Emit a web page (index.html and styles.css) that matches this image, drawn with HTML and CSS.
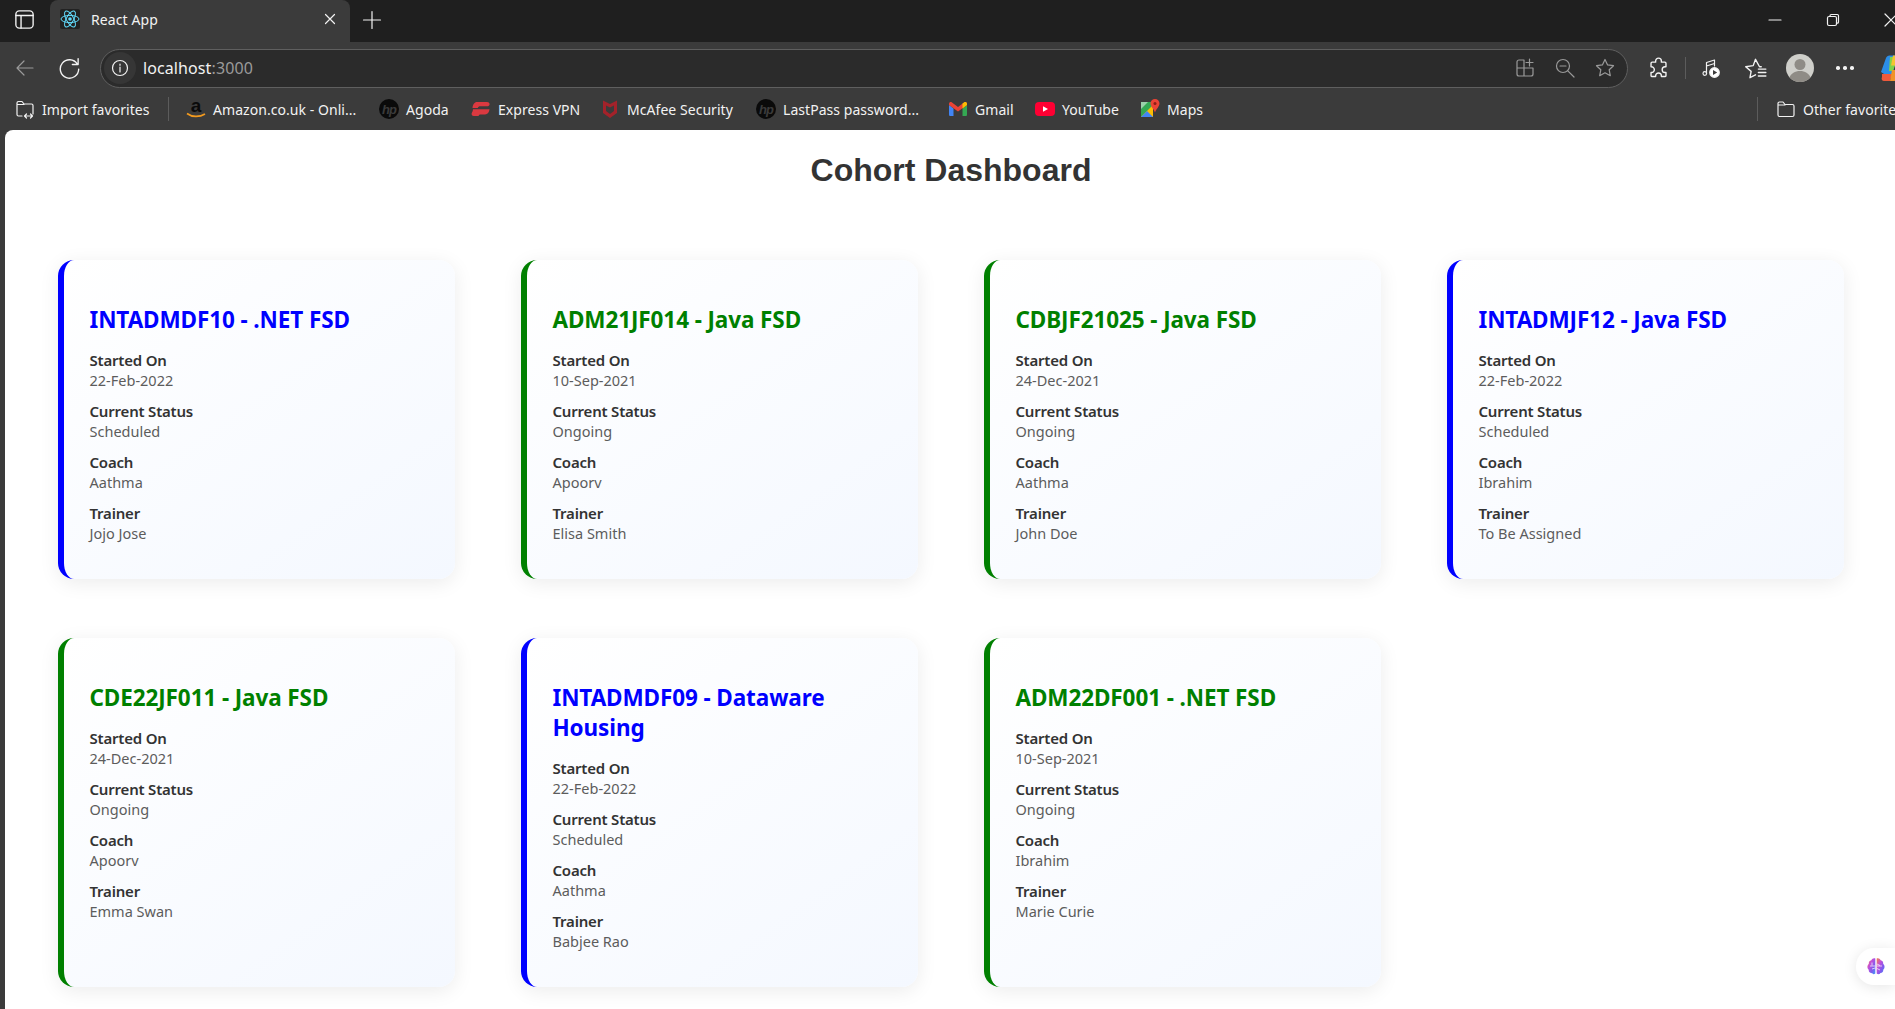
FILE: index.html
```html
<!DOCTYPE html>
<html lang="en">
  <head>
    <meta charset="UTF-8" />
    <meta name="viewport" content="width=device-width, initial-scale=1.0" />
    <title>React App</title>
    <link rel="stylesheet" href="styles.css">
  </head>
  <body>
    <!-- browser frame -->
    <div class="tabstrip">
      <div class="tab-slot">
        <svg class="icon icon-lg" viewBox="0 0 20 20"><rect x="2.500" y="2.500" width="15" height="15" rx="3"/><path d="M2.500 6.500h15M7 6.500v11"/></svg>
      </div>
      <div class="tab">
        <svg class="favicon" viewBox="0 0 20 20">
          <rect width="20" height="20" rx="2" fill="#222"/>
          <g fill="none" stroke="#61dafb" stroke-width="1">
            <ellipse cx="10" cy="10" rx="9" ry="3.600"/>
            <ellipse cx="10" cy="10" rx="9" ry="3.600" transform="rotate(60 10 10)"/>
            <ellipse cx="10" cy="10" rx="9" ry="3.600" transform="rotate(120 10 10)"/>
          </g>
          <circle cx="10" cy="10" r="1.800" fill="#61dafb"/>
        </svg>
        <span class="tab-title">React App</span>
        <svg class="tab-close" viewBox="0 0 12 12"><path d="M1.500 1.500l9 9M10.500 1.500l-9 9"/></svg>
      </div>
      <svg class="new-tab" viewBox="0 0 20 20"><path d="M10 1.500v17M1.500 10h17"/></svg>
      <div class="win-controls">
        <div class="win-btn"><svg class="icon-sm" viewBox="0 0 14 14"><path d="M1 7h12"/></svg></div>
        <div class="win-btn"><svg class="icon-sm" viewBox="0 0 14 14"><rect x="1.500" y="3.500" width="9" height="9" rx="1.500"/><path d="M4 3.500V2.800c0-.8.500-1.300 1.300-1.300h6c.7 0 1.200.5 1.200 1.200v6.200c0 .8-.5 1.300-1.300 1.300h-.7"/></svg></div>
        <div class="win-btn"><svg class="icon-sm" viewBox="0 0 14 14"><path d="M1 1l12 12M13 1L1 13"/></svg></div>
      </div>
    </div>

    <div class="toolbar">
      <div class="tool-btn back">
        <svg class="icon dim" viewBox="0 0 20 20"><path d="M18 10H2M9 3l-7 7 7 7"/></svg>
      </div>
      <div class="tool-btn reload">
        <svg class="icon icon-lg" viewBox="0 0 20 20"><path d="M16.800 6.200A8 8 0 1 0 18 10.500M17.500 1.500v5h-5"/></svg>
      </div>
      <div class="address">
        <div class="site-info">
          <svg class="icon" viewBox="0 0 20 20"><circle cx="10" cy="10" r="7.500"/><path d="M10 9v5M10 6v1.300"/></svg>
        </div>
        <span class="url">localhost<span class="port">:3000</span></span>
        <div class="address-icons">
          <svg class="icon dim" viewBox="0 0 20 20"><path d="M9 2H4a2 2 0 0 0-2 2v12a2 2 0 0 0 2 2h12a2 2 0 0 0 2-2V10H2M9 2v16M14.500 1v7M11 4.500h7"/></svg>
          <svg class="icon dim" viewBox="0 0 20 20"><circle cx="8" cy="8" r="6.500"/><path d="M12.800 12.800L19 19M5 8h6"/></svg>
          <svg class="icon dim" viewBox="0 0 20 20"><path d="M10 1.500l2.600 5.400 5.900.8-4.300 4.100 1.100 5.900L10 14.800l-5.300 2.900 1.100-5.900L1.500 7.700l5.900-.8z"/></svg>
        </div>
      </div>
      <div class="tool-btn ext">
        <svg class="icon icon-lg" viewBox="0 0 20 20"><path d="M7.500 4.500V3.500a2.500 2.500 0 0 1 5 0v1h3a1 1 0 0 1 1 1v3h-.8a2.500 2.500 0 0 0 0 5h.8v2.500a1 1 0 0 1-1 1h-3v-.6a2.500 2.500 0 0 0-5 0v.6h-3a1 1 0 0 1-1-1v-2.500h.4a2.500 2.500 0 0 0 0-5h-.4v-3a1 1 0 0 1 1-1z"/></svg>
      </div>
      <div class="tool-sep"></div>
      <div class="tool-btn">
        <svg class="icon" viewBox="0 0 20 20"><path d="M5.500 15.500V4.500l8-2.500v6M5.500 8l8-2.500"/><circle cx="3.800" cy="15.500" r="1.800"/><circle cx="13.500" cy="14.500" r="4.800" fill="#fff"/><path d="M12 12l4.200 2.500-4.200 2.500z" fill="#3b3b3b" stroke="none"/></svg>
      </div>
      <div class="tool-btn favs">
        <svg class="icon icon-lg" viewBox="0 0 20 20"><path d="M15 8.500h-1.500L10 2 8 7.500 1.500 8.500l4.700 4-1 5.500 4.800-2.500M12.500 10.500H19M12.500 13.500H19M12.500 16.500H19"/></svg>
      </div>
      <div class="tool-btn avatar-btn">
        <svg class="avatar" viewBox="0 0 28 28">
          <circle cx="14" cy="14" r="14" fill="#cfcfca"/>
          <circle cx="14" cy="10.500" r="5.500" fill="#8f8c86"/>
          <path d="M3.500 23.500c1.500-4 5.500-6.500 10.500-6.500s9 2.500 10.500 6.500A14 14 0 0 1 14 28a14 14 0 0 1-10.500-4.500z" fill="#8f8c86"/>
        </svg>
      </div>
      <div class="tool-btn dots"><span></span><span></span><span></span></div>
      <div class="tool-btn">
        <svg class="copilot" viewBox="0 0 24 28">
          <path d="M3 18L8 4c.5-1.500 2-2.500 3.500-2.500H20L14 20H6z" fill="#2b8ee8"/>
          <path d="M12 3h8l-5 14h-4z" fill="#7ed24a"/>
          <path d="M15 1.500h6l-3 10h-5z" fill="#f4c430"/>
          <path d="M4 20h10l-2 7H6c-2 0-3-2-2-4z" fill="#ef5a3c"/>
          <path d="M14 16h6l-3 11h-5z" fill="#f0932b"/>
        </svg>
      </div>
    </div>

    <div class="bookmarks">
      <div class="bm bm-import">
        <svg class="icon" viewBox="0 0 20 20"><path d="M7 17H3.500A1.500 1.500 0 0 1 2 15.500V4a1.500 1.500 0 0 1 1.500-1.500H7L9 5h7.500A1.500 1.500 0 0 1 18 6.500V15M2 5.500h7M9.500 17h8M11.500 15l-2 2 2 2M15.500 15l2 2-2 2"/></svg>
        <span>Import favorites</span>
      </div>
      <div class="bm-sep"></div>
      <div class="bm bm-amazon">
        <svg class="bm-icon" viewBox="0 0 20 20">
          <text x="10" y="12.500" text-anchor="middle" class="amazon-a">a</text>
          <path d="M1 14.500c5 3.800 12.500 3.800 18 .5" fill="none" stroke="#f29a1f" stroke-width="1.600"/>
        </svg>
        <span>Amazon.co.uk - Onli...</span>
      </div>
      <div class="bm bm-agoda">
        <svg class="bm-icon" viewBox="0 0 20 20"><circle cx="10" cy="10" r="10" fill="#0a0a0a"/><text x="10" y="14.500" text-anchor="middle" class="hp-mark">hp</text></svg>
        <span>Agoda</span>
      </div>
      <div class="bm bm-express">
        <svg class="bm-icon" viewBox="0 0 20 20">
          <path d="M6 3h10c3 0 3.500 3.500 1 4.200H9.500C8 7.200 7 7.800 6.800 9H1.500C1.800 5.500 3.500 3 6 3z" fill="#da3940"/>
          <path d="M2 10.200h16.500c-.2 3-2 5-4.500 5.200H9.500c-1 0-1.800.5-2 1.600H3c-2.300 0-3-2-2-3.500.6-.9 1-2 1-3.300z" fill="#da3940"/>
        </svg>
        <span>Express VPN</span>
      </div>
      <div class="bm bm-mcafee">
        <svg class="bm-icon" viewBox="0 0 20 20"><path d="M3 1.500l7 3.500 7-3.500V14l-7 5-7-5z" fill="#a3222a"/><path d="M6 6.500l4 2 4-2V12l-4 3-4-3z" fill="#3b3b3b"/></svg>
        <span>McAfee Security</span>
      </div>
      <div class="bm bm-lastpass">
        <svg class="bm-icon" viewBox="0 0 20 20"><circle cx="10" cy="10" r="10" fill="#0a0a0a"/><text x="10" y="14.500" text-anchor="middle" class="hp-mark">hp</text></svg>
        <span>LastPass password...</span>
      </div>
      <div class="bm bm-gmail">
        <svg class="bm-icon" viewBox="0 0 20 20">
          <path d="M1 6l4.500 3.500V17H2.500C1.500 17 1 16.500 1 15.500z" fill="#4285f4"/>
          <path d="M19 6l-4.500 3.500V17h3c1 0 1.500-.5 1.500-1.500z" fill="#34a853"/>
          <path d="M1 5c0-2 2-2.500 3-1.500l6 4.500 6-4.500c1-1 3-.5 3 1.500v1l-9 6.500L1 6z" fill="#ea4335"/>
          <path d="M14.500 4.600L16 3.500c1-1 3-.5 3 1.500v1l-4.500 3.500z" fill="#fbbc04"/>
        </svg>
        <span>Gmail</span>
      </div>
      <div class="bm bm-youtube">
        <svg class="bm-icon" viewBox="0 0 20 20"><rect y="3" width="20" height="14" rx="4" fill="#ff0033"/><path d="M8 7.200l5 2.800-5 2.800z" fill="#fff"/></svg>
        <span>YouTube</span>
      </div>
      <div class="bm bm-maps">
        <svg class="bm-icon" viewBox="0 0 20 20">
          <path d="M1 3h12v15H1z" fill="#34a853"/>
          <path d="M1 18l12-12v12z" fill="#fbbc04"/>
          <path d="M1 18l6-6 6 6z" fill="#4285f4"/>
          <path d="M1 3h7L1 10z" fill="#9ad0a9"/>
          <path d="M15 0c2.500 0 4.500 2 4.500 4.500 0 3-3 5-4.500 9-1.500-4-4.500-6-4.500-9C10.500 2 12.500 0 15 0z" fill="#ea4335"/>
          <circle cx="15" cy="4.500" r="1.500" fill="#8c1f16"/>
        </svg>
        <span>Maps</span>
      </div>
      <div class="bm-sep bm-sep-end"></div>
      <div class="bm bm-other">
        <svg class="icon" viewBox="0 0 20 20"><path d="M2 5.500V16a1.500 1.500 0 0 0 1.500 1.500h13A1.500 1.500 0 0 0 18 16V7a1.500 1.500 0 0 0-1.500-1.500H9L7 3H3.500A1.500 1.500 0 0 0 2 4.500zM2 6h7"/></svg>
        <span>Other favorites</span>
      </div>
    </div>

    <!-- the app -->
    <div class="page">
      <h1>Cohort Dashboard</h1>
      <div class="cohort-grid">
        <div class="card scheduled">
          <h2>INTADMDF10 - .NET FSD</h2>
          <dl>
            <dt>Started On</dt><dd>22-Feb-2022</dd>
            <dt>Current Status</dt><dd>Scheduled</dd>
            <dt>Coach</dt><dd>Aathma</dd>
            <dt>Trainer</dt><dd>Jojo Jose</dd>
          </dl>
        </div>
        <div class="card ongoing">
          <h2>ADM21JF014 - Java FSD</h2>
          <dl>
            <dt>Started On</dt><dd>10-Sep-2021</dd>
            <dt>Current Status</dt><dd>Ongoing</dd>
            <dt>Coach</dt><dd>Apoorv</dd>
            <dt>Trainer</dt><dd>Elisa Smith</dd>
          </dl>
        </div>
        <div class="card ongoing">
          <h2>CDBJF21025 - Java FSD</h2>
          <dl>
            <dt>Started On</dt><dd>24-Dec-2021</dd>
            <dt>Current Status</dt><dd>Ongoing</dd>
            <dt>Coach</dt><dd>Aathma</dd>
            <dt>Trainer</dt><dd>John Doe</dd>
          </dl>
        </div>
        <div class="card scheduled">
          <h2>INTADMJF12 - Java FSD</h2>
          <dl>
            <dt>Started On</dt><dd>22-Feb-2022</dd>
            <dt>Current Status</dt><dd>Scheduled</dd>
            <dt>Coach</dt><dd>Ibrahim</dd>
            <dt>Trainer</dt><dd>To Be Assigned</dd>
          </dl>
        </div>
        <div class="card ongoing">
          <h2>CDE22JF011 - Java FSD</h2>
          <dl>
            <dt>Started On</dt><dd>24-Dec-2021</dd>
            <dt>Current Status</dt><dd>Ongoing</dd>
            <dt>Coach</dt><dd>Apoorv</dd>
            <dt>Trainer</dt><dd>Emma Swan</dd>
          </dl>
        </div>
        <div class="card scheduled">
          <h2>INTADMDF09 - Dataware Housing</h2>
          <dl>
            <dt>Started On</dt><dd>22-Feb-2022</dd>
            <dt>Current Status</dt><dd>Scheduled</dd>
            <dt>Coach</dt><dd>Aathma</dd>
            <dt>Trainer</dt><dd>Babjee Rao</dd>
          </dl>
        </div>
        <div class="card ongoing">
          <h2>ADM22DF001 - .NET FSD</h2>
          <dl>
            <dt>Started On</dt><dd>10-Sep-2021</dd>
            <dt>Current Status</dt><dd>Ongoing</dd>
            <dt>Coach</dt><dd>Ibrahim</dd>
            <dt>Trainer</dt><dd>Marie Curie</dd>
          </dl>
        </div>
      </div>
      <div class="float-btn">
        <svg viewBox="0 0 20 20" class="brain">
          <defs>
            <linearGradient id="brainFill" x1="0" y1="0" x2="1" y2="1">
              <stop offset="0" stop-color="#f5853f"/>
              <stop offset="0.35" stop-color="#c44fd8"/>
              <stop offset="0.7" stop-color="#7a5cf0"/>
              <stop offset="1" stop-color="#3fa0f5"/>
            </linearGradient>
          </defs>
          <path d="M9.300 2.500v15c-1 1-3 1-3.700-.5-2 0-3.200-1.500-2.800-3.300C1 12.500 1 9 2.800 8 2.500 6 3.500 4.500 5.300 4.200 6 2.500 8 1.700 9.300 2.500z" fill="url(#brainFill)"/>
          <path d="M10.700 2.500v15c1 1 3 1 3.700-.5 2 0 3.200-1.500 2.800-3.300 1.800-1.200 1.800-4.700 0-5.700.3-2-.7-3.500-2.500-3.800C14 2.500 12 1.700 10.700 2.500z" fill="url(#brainFill)"/>
          <path d="M4 10h5M6 6.500v3M6 13l3-1M11 8l3 1.500M16 10h-5M14 14l-3-1.500" stroke="#fff" stroke-width=".7" fill="none"/>
        </svg>
      </div>
    </div>
  </body>
</html>
```

FILE: styles.css
```css
* {
  box-sizing: border-box;
}

body {
  margin: 0;
  height: 100vh;
  overflow: hidden;
  display: flex;
  flex-direction: column;
  background-color: #3b3b3b;
  font-family: "Noto Sans", "Open Sans", sans-serif;
}

/* shared icon strokes */
.icon,
.icon-sm,
.tab-close,
.new-tab {
  fill: none;
  stroke: #f2f2f2;
  stroke-width: 1.2;
  stroke-linecap: round;
  stroke-linejoin: round;
}

.icon {
  width: 20px;
  height: 20px;
}

.icon-lg {
  width: 23px;
  height: 23px;
}

.icon.dim {
  stroke: #9a9a9a;
}

.icon-sm {
  width: 14px;
  height: 14px;
}

/* tab strip */
.tabstrip {
  height: 42px;
  flex-shrink: 0;
  display: flex;
  align-items: flex-end;
  background-color: #1f1f1f;
  overflow: hidden;
}

.tab-slot {
  width: 50px;
  height: 42px;
  display: flex;
  align-items: center;
  justify-content: center;
  padding: 0 1px 3px 0;
}

.tab {
  width: 300px;
  height: 42px;
  display: flex;
  align-items: center;
  padding: 0 14px 4px 10px;
  background-color: #3b3b3b;
  border-radius: 8px 8px 0 0;
}

.favicon {
  width: 20px;
  height: 20px;
}

.tab-title {
  margin-left: 11px;
  flex: 1;
  color: #f2f2f2;
  font-size: 14px;
  letter-spacing: 0.1px;
}

.tab-close {
  width: 12px;
  height: 12px;
}

.new-tab {
  width: 20px;
  height: 20px;
  margin: 0 0 12px 12px;
}

.win-controls {
  margin-left: auto;
  width: 174px;
  flex-shrink: 0;
  display: flex;
  margin-right: -25px;
  padding-bottom: 2px;
}

.win-btn {
  width: 58px;
  height: 40px;
  display: flex;
  align-items: center;
  justify-content: center;
}

/* toolbar */
.toolbar {
  height: 52px;
  flex-shrink: 0;
  display: flex;
  align-items: center;
  padding: 6px 0 6px 4px;
  overflow: hidden;
}

.tool-btn {
  width: 40px;
  height: 36px;
  flex-shrink: 0;
  display: flex;
  align-items: center;
  justify-content: center;
  margin-left: 5px;
}

.tool-btn.back {
  margin-left: 1px;
}

.tool-btn.reload {
  margin-left: 4px;
}

.tool-btn.ext {
  margin-left: 10px;
}

.tool-btn.favs {
  margin-left: 4px;
}

.tool-sep {
  width: 1px;
  height: 22px;
  margin-left: 7px;
  flex-shrink: 0;
  background-color: #5c5c5c;
}

.address {
  width: 1528px;
  height: 39px;
  margin-left: 11px;
  flex-shrink: 0;
  display: flex;
  align-items: center;
  background-color: #2b2b2b;
  border: 1px solid #5f5f5f;
  border-radius: 20px;
  padding: 0 12px 0 3px;
}

.site-info {
  width: 32px;
  height: 32px;
  display: flex;
  align-items: center;
  justify-content: center;
  background-color: #363636;
  border-radius: 50%;
}

.url {
  margin-left: 7px;
  font-size: 16px;
  letter-spacing: 0.1px;
  color: #f2f2f2;
}

.port {
  color: #9a9a9a;
}

.address-icons {
  margin-left: auto;
  display: flex;
  gap: 20px;
}

.avatar {
  width: 28px;
  height: 28px;
}

.copilot {
  width: 24px;
  height: 28px;
}

.dots {
  gap: 3.500px;
}

.dots span {
  width: 3.500px;
  height: 3.500px;
  border-radius: 50%;
  background-color: #f2f2f2;
}

/* bookmarks bar */
.bookmarks {
  height: 36px;
  flex-shrink: 0;
  display: flex;
  align-items: center;
  padding: 0 0 6px 15px;
  overflow: hidden;
  color: #f2f2f2;
  font-size: 14px;
  letter-spacing: 0.05px;
  white-space: nowrap;
}

.bm {
  display: flex;
  align-items: center;
  flex-shrink: 0;
}

.bm .icon {
  margin-right: 7px;
}

.bm-icon {
  width: 20px;
  height: 20px;
  margin-right: 7px;
  flex-shrink: 0;
}

.amazon-a {
  font-family: "Liberation Sans", sans-serif;
  font-weight: 700;
  font-size: 19px;
  fill: #0a0a0a;
}

.hp-mark {
  font-family: "Liberation Sans", sans-serif;
  font-style: italic;
  font-weight: 700;
  font-size: 13px;
  letter-spacing: -1px;
  fill: #3b3b3b;
}

.bm-sep {
  width: 1px;
  height: 24px;
  flex-shrink: 0;
  background-color: #5c5c5c;
}

.bm-import { width: 153px; }
.bm-amazon { width: 193px; margin-left: 17px; }
.bm-agoda { width: 92px; }
.bm-express { width: 129px; }
.bm-mcafee { width: 156px; }
.bm-lastpass { width: 192px; }
.bm-gmail { width: 87px; }
.bm-youtube { width: 105px; }
.bm-maps { width: 617px; }
.bm-other { margin-left: 18px; }

/* dashboard */
.page {
  flex: 1;
  position: relative;
  margin-left: 5px;
  background-color: #fff;
  border-radius: 8px 0 0 0;
  padding: 0 51px 0 53px;
  overflow: hidden;
}

h1 {
  margin: 22px 0 0;
  height: 89px;
  color: #333;
  font-family: "Liberation Sans", Arial, sans-serif;
  font-size: 32px;
  line-height: 37px;
  font-weight: 700;
  text-align: center;
}

.cohort-grid {
  margin-top: 19px;
  display: grid;
  grid-template-columns: repeat(4, 397px);
  column-gap: 66px;
  row-gap: 59px;
}

.card {
  padding: 45px 24px 36px 25.500px;
  background: linear-gradient(145deg, #ffffff, #f4f8ff);
  border-left: 6px solid;
  border-radius: 16px;
  box-shadow: 0 4px 20px rgba(0, 0, 0, 0.08);
}

.card.scheduled {
  border-left-color: #0000ff;
}

.card.ongoing {
  border-left-color: #008000;
}

.card h2 {
  margin: 0 0 15px;
  font-size: 22.500px;
  line-height: 30px;
  font-weight: 700;
  letter-spacing: -0.1px;
}

.scheduled h2 {
  color: #0000ff;
}

.ongoing h2 {
  color: #008000;
}

dl {
  margin: 0;
}

dt {
  margin-top: 11px;
  color: #333;
  font-size: 15px;
  line-height: 20px;
  font-weight: 600;
  letter-spacing: -0.2px;
}

dt:first-child {
  margin-top: 0;
}

dd {
  margin: 0;
  color: #5c5c5c;
  font-size: 14.500px;
  line-height: 20px;
}

.float-btn {
  position: absolute;
  right: 0;
  top: 818px;
  width: 39px;
  height: 37px;
  padding: 8px 0 0 10px;
  background-color: #fff;
  border-radius: 18px 0 0 18px;
  box-shadow: 0 2px 14px rgba(0, 0, 0, 0.1);
}

.brain {
  display: block;
  width: 20px;
  height: 20px;
}
```
